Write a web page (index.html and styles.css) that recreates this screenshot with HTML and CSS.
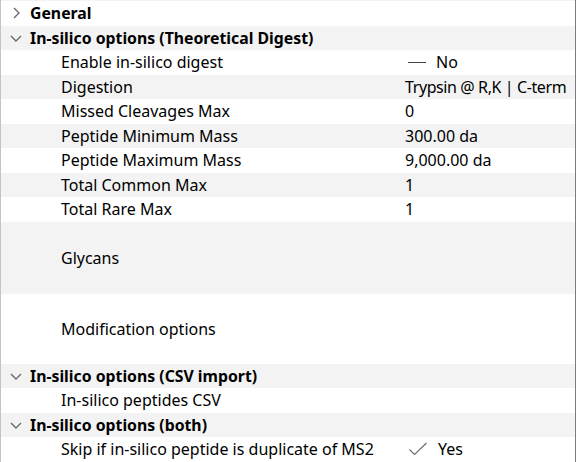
FILE: index.html
```html
<!DOCTYPE html>
<html>
<head>
<meta charset="utf-8">
<link rel="stylesheet" href="styles.css">
</head>
<body>
<div class="grid">
  <div class="row alt strip"></div>
  <div class="row group">
    <span class="chev"><svg width="12" height="12" viewBox="0 0 12 12"><path d="M4 1 L9 6 L4 11" fill="none" stroke="#6a6a6a" stroke-width="1.4"/></svg></span>
    <span class="glabel">General</span>
  </div>
  <div class="row group alt">
    <span class="chev"><svg width="12" height="12" viewBox="0 0 12 12"><path d="M1 4 L6 9 L11 4" fill="none" stroke="#6a6a6a" stroke-width="1.4"/></svg></span>
    <span class="glabel">In-silico options (Theoretical Digest)</span>
  </div>
  <div class="row prop">
    <span class="name">Enable in-silico digest</span>
    <span class="value"><span class="dash"></span>No</span>
  </div>
  <div class="row prop alt">
    <span class="name">Digestion</span>
    <span class="value tight">Trypsin @ R,K | C-term</span>
  </div>
  <div class="row prop">
    <span class="name">Missed Cleavages Max</span>
    <span class="value">0</span>
  </div>
  <div class="row prop alt">
    <span class="name">Peptide Minimum Mass</span>
    <span class="value">300.00 da</span>
  </div>
  <div class="row prop">
    <span class="name">Peptide Maximum Mass</span>
    <span class="value">9,000.00 da</span>
  </div>
  <div class="row prop alt">
    <span class="name">Total Common Max</span>
    <span class="value">1</span>
  </div>
  <div class="row prop">
    <span class="name">Total Rare Max</span>
    <span class="value">1</span>
  </div>
  <div class="row prop alt tall1">
    <span class="name">Glycans</span>
    <span class="value"></span>
  </div>
  <div class="row prop tall2">
    <span class="name">Modification options</span>
    <span class="value"></span>
  </div>
  <div class="row group alt">
    <span class="chev"><svg width="12" height="12" viewBox="0 0 12 12"><path d="M1 4 L6 9 L11 4" fill="none" stroke="#6a6a6a" stroke-width="1.4"/></svg></span>
    <span class="glabel">In-silico options (CSV import)</span>
  </div>
  <div class="row prop">
    <span class="name">In-silico peptides CSV</span>
    <span class="value"></span>
  </div>
  <div class="row group alt">
    <span class="chev"><svg width="12" height="12" viewBox="0 0 12 12"><path d="M1 4 L6 9 L11 4" fill="none" stroke="#6a6a6a" stroke-width="1.4"/></svg></span>
    <span class="glabel">In-silico options (both)</span>
  </div>
  <div class="row prop">
    <span class="name">Skip if in-silico peptide is duplicate of MS2</span>
    <span class="value"><span class="check"><svg width="20" height="14" viewBox="0 0 20 14"><path d="M1.5 7.5 L6.5 12.5 L18.5 1" fill="none" stroke="#6a6a6a" stroke-width="1.1"/></svg></span>Yes</span>
  </div>
</div>
</body>
</html>
```

FILE: styles.css
```css
html, body {
  margin: 0;
  padding: 0;
  background: #ffffff;
}

.grid {
  width: 576px;
  height: 462px;
  overflow: hidden;
  box-sizing: border-box;
  border-left: 1px solid #c4c4c4;
  border-right: 1px solid #7c7c7c;
  font-family: "Noto Sans", "Open Sans", sans-serif;
  font-size: 16px;
  color: #000000;
  display: flex;
  flex-direction: column;
}

.row {
  flex: none;
  height: 24.5px;
  display: flex;
  align-items: center;
  background: #ffffff;
}

.row.alt {
  background: #f3f3f3;
}

.row.strip {
  height: 1px;
}

.row.tall1 {
  height: 72px;
}

.row.tall2 {
  height: 70px;
}

.chev {
  width: 29px;
  display: flex;
  justify-content: center;
  box-sizing: border-box;
}

.chev svg {
  display: block;
}

.glabel {
  font-weight: 700;
  font-size: 15.8px;
}

.name {
  padding-left: 60px;
  width: 404px;
  box-sizing: border-box;
  white-space: nowrap;
}

.value {
  display: flex;
  align-items: center;
  white-space: nowrap;
}

.value.tight {
  letter-spacing: -0.4px;
}

.dash {
  display: inline-block;
  width: 18px;
  height: 1px;
  background: #444;
  margin: 0 10px 0 3px;
}

.check {
  display: flex;
  margin: 0 10px 0 3px;
}

.check svg {
  display: block;
}
```
